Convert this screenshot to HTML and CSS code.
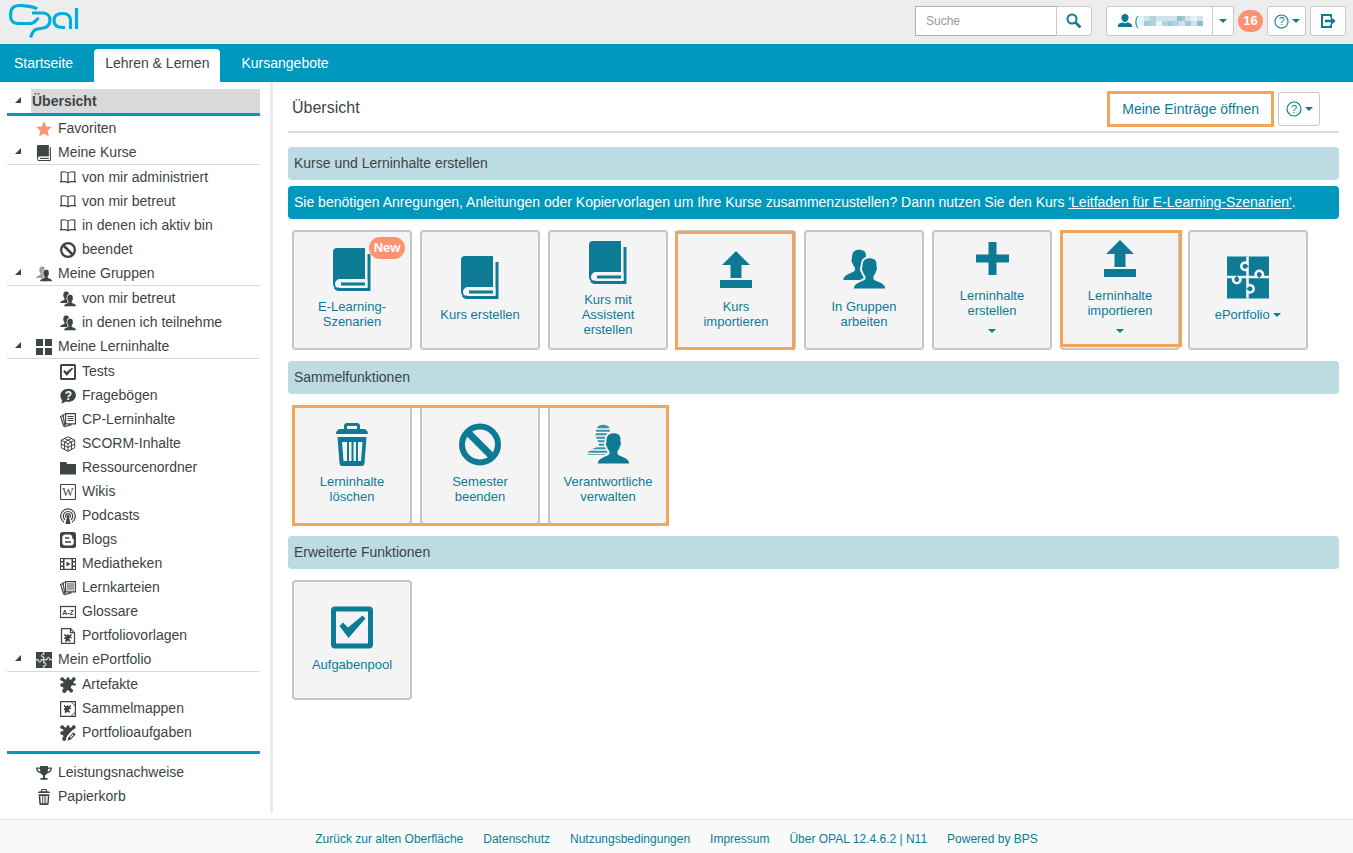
FILE: index.html
```html
<!DOCTYPE html>
<html lang="de">

<head>
    <meta charset="UTF-8">
    <meta name="viewport" content="width=device-width, initial-scale=1.0">
    <title>OPAL - Lehren &amp; Lernen</title>
    <link rel="stylesheet" href="styles.css">
</head>

<body>
    <!-- Icon sprite -->
    <svg class="sprite" aria-hidden="true">
        <symbol id="i-star" viewBox="0 0 16 16"><path d="M8 .3l2.200 5.200 5.600.5-4.200 3.700 1.300 5.700L8 12.400l-4.900 3 1.300-5.700L.2 6l5.600-.5z"/></symbol>
        <symbol id="i-book" viewBox="0 0 38 43"><path d="M4 0h28v31H7a5 5 0 0 0 0 10h-2a5 5 0 0 1-5-5V4a4 4 0 0 1 4-4z"/><path d="M34.500 6H37.500V43H5a5 5 0 0 1-4-3l6-1h27.500z"/><path class="cut" d="M32 31.500H7.500a3.500 3.500 0 0 0 0 8.500H34.500V31.500z"/><path d="M8 34.500h24v3H8z"/></symbol>
        <symbol id="i-open" viewBox="0 0 16 16"><path class="line" d="M8 3.200C6.500 1.700 3 1.700 1.200 2v9.800c2-.3 5.300-.3 6.800.9 1.500-1.200 4.800-1.200 6.800-.9V2C13 1.700 9.500 1.700 8 3.200zM8 3.200v9.500M0 11.800h1.200M14.800 11.800H16"/></symbol>
        <symbol id="i-ban" viewBox="0 0 42 42"><circle cx="21" cy="21" r="18" fill="none" stroke="currentColor" stroke-width="6"/><path d="M8.500 8.500l25 25" stroke="currentColor" stroke-width="7"/></symbol>
        <symbol id="i-person" viewBox="0 0 32 31" overflow="visible"><path d="M15.800.3c4.200 0 6.900 1.400 7.100 5l.1 4c.9.5.4 3.200-.6 4-.4 2-1.200 3.400-2.400 4.800v2.900c1.800 3 11.200 3 11.700 9.500H.3c.4-6.500 9.800-6.500 11.600-9.500v-2.900c-1.300-1.400-2.100-2.800-2.500-4.800-1-.8-1.300-3.500-.5-4 0-5.500 1.500-9 6.900-9z"/></symbol>
        <symbol id="i-group" viewBox="0 0 42 40"><use href="#i-person" width="32" height="31"/><g transform="translate(10.500 8.500)"><use href="#i-person" width="32" height="31" class="halo"/></g></symbol>
        <symbol id="i-group-light" viewBox="0 0 42 40"><use href="#i-person" width="32" height="31" opacity=".5"/><g transform="translate(10.500 8.500)"><use href="#i-person" width="32" height="31" class="halo"/></g></symbol>
        <symbol id="i-group-lines" viewBox="0 0 42 40"><use href="#i-person" width="32" height="31" opacity=".8"/><path class="cut-line" d="M0 4.500h32M0 8h32M0 11.500h32M0 15h32M0 18.500h32M0 22h32M0 25.500h32M0 29h32"/><g transform="translate(10.500 8.500)"><use href="#i-person" width="32" height="31" class="halo"/></g></symbol>
        <symbol id="i-grid" viewBox="0 0 16 16"><path d="M0 0h7v7H0zM9 0h7v7H9zM0 9h7v7H0zM9 9h7v7H9z"/></symbol>
        <symbol id="i-check" viewBox="0 0 42 42"><rect x="2.500" y="2.500" width="37" height="37" rx="1.500" fill="none" stroke="currentColor" stroke-width="5"/><path d="M8.500 19.500l3.500-3.500 5 5L31.500 9l3 3L17.500 31.500z"/></symbol>
        <symbol id="i-cards" viewBox="0 0 16 16"><path class="line" d="M5.600 1.600h9.800v10.200H5.600zM4.800 2.500L3 3l2 11.500 6.500-1.800M2.500 3.800L.6 4.500 3.800 14.500"/><path class="line" d="M7.500 4.500h6M7.500 6.500h6M7.500 8.500h6"/></symbol>
        <symbol id="i-flash" viewBox="0 0 16 16"><path class="line" d="M5.600 1.600h9.800v10.200H5.600zM4.800 2.500L3 3l2 11.500 6.500-1.800M2.500 3.800L.6 4.500 3.800 14.500"/><path d="M7 3h7v7.500H7z" opacity=".5"/></symbol>
        <symbol id="i-cube" viewBox="0 0 16 16"><path class="line thin" d="M8 .7l6.700 3.500v7.600L8 15.300l-6.700-3.500V4.200zM1.300 4.200L8 7.700l6.700-3.500M8 7.700v7.600M4.700 2.500l6.700 3.500v7.600M11.300 2.500L4.600 6v7.600M1.300 8L8 11.500 14.700 8"/></symbol>
        <symbol id="i-folder" viewBox="0 0 16 16"><path d="M0 2h6l1.500 2H16v10.500H0z"/></symbol>
        <symbol id="i-podcast" viewBox="0 0 16 16"><path class="line" d="M4 14.200a7.300 7.300 0 1 1 8 0M5 11.800a4.700 4.700 0 1 1 6 0M6.300 9.500a2.300 2.300 0 1 1 3.400 0"/><path d="M8 6.800a1.300 1.300 0 0 1 1 2l1.500 7.200h-5L7 8.800a1.300 1.300 0 0 1 1-2z"/></symbol>
        <symbol id="i-blog" viewBox="0 0 16 16"><rect width="16" height="16" rx="2.500"/><path class="cut" d="M5.500 2.500h3.800c1.800 0 3 1.200 3 3v.8c0 .6.400.7.900.8.500.1.600.5.600 1v2.200c0 2-1.300 3.300-3.200 3.300H5.500c-2 0-3.200-1.300-3.200-3.300V5.800c0-2 1.200-3.300 3.200-3.300z"/><path d="M5 5.200h4.300v1.600H5zM5 9.200h6v1.600H5z"/></symbol>
        <symbol id="i-film" viewBox="0 0 16 16"><path d="M0 2h4.500v12H0zM11.500 2H16v12h-4.500z"/><path class="line" d="M4 2.600h8M4 13.400h8"/><path d="M6.500 5.500v5l4-2.500z"/><path class="cut" d="M1 3h2v2H1zM1 6.500h2v3H1zM1 11h2v2H1zM13 3h2v2h-2zM13 6.500h2v3h-2zM13 11h2v2h-2z"/></symbol>
        <symbol id="i-piece" viewBox="0 0 16 16"><path d="M1.500.5c1-.8 2.500 0 2.500 1.300 1 .9 1.800.9 2.800 0C6.500.7 8-.3 9.200.7c.6.6.5 1.300.3 1.800 1 .4 1.800.1 2.500-.7C12 .5 13.800-.2 15 .8c1.300 1.200.5 3-1 3.200-.7 1-.7 1.700.2 2.500.8-.4 2 .2 1.800 1.500-.8 1.200-1.500.7-2.200.3-1.600-.6-3.300.7-3 2.200.2 1 1 1.300 1.700 2 1 .8.600 2.200-.5 2.900-1.300.6-2.500-.1-2.500-1.400-1-.9-2-.9-3 0-.2 1.500-1.500 2.300-2.800 1.800-1.500-.5-2-2-1-3.300.8-.8.800-1.600.2-2.500-1.700.2-2.900-.8-2.700-2.200.3-1.400 1.500-1.900 2.600-1.300.7-.9.700-1.800 0-2.500C1 4.200 0 3.300.2 2 .3 1.300.8.700 1.500.5z"/></symbol>
        <symbol id="i-template" viewBox="0 0 16 16"><path class="line" d="M1.500.7h9l4 4v10.600h-13zM10.500.7v4h4"/><use href="#i-piece" x="4" y="6" width="8" height="8"/></symbol>
        <symbol id="i-folio" viewBox="0 0 16 16"><path class="line" d="M.6.6h14.800v14.800H.6z"/><path class="line thin" d="M11 .6l4.400 4.400M11 15.400l4.400-4.400"/><use href="#i-piece" x="3.500" y="4" width="8" height="8"/></symbol>
        <symbol id="i-task" viewBox="0 0 16 16"><use href="#i-piece" width="16" height="16"/><path class="cut" d="M5.500 16l1.500-5L13 4.500 16 6v10z"/><path d="M7.500 15.500l.8-3L13.500 7.300l2.200 2.200-5.200 5.200z"/><path class="cut" d="M9.800 12.300l3-3 .8.800-3 3z"/></symbol>
        <symbol id="i-puzzle" viewBox="0 0 42 42"><path d="M0 0h42v42H0z"/><path d="M20.500 0v7a3.700 3.700 0 1 0 0 5.500v17a3.700 3.700 0 1 1 0 5.500V42M0 20.500h7a3.700 3.700 0 1 0 5.500 0h17a3.700 3.700 0 1 1 5.500 0H42" fill="none" stroke="var(--cut)" stroke-width="2.600"/></symbol>
        <symbol id="i-cup" viewBox="0 0 16 16"><path d="M4 1h8v1.500h4C16 6 14 8 11 8.500c-.7 1-1.300 1.500-2 1.800V13h2.500v1.800h-7V13H7v-2.700C6.300 10 5.700 9.500 5 8.500 2 8 0 6 0 2.500h4zM1.500 3.800c.3 1.500 1.300 2.600 2.800 3L4 3.800zM14.500 3.800H12l-.3 3c1.500-.4 2.500-1.500 2.800-3z" fill-rule="evenodd"/></symbol>
        <symbol id="i-trash" viewBox="0 0 32 43"><path d="M8 6V3a3 3 0 0 1 3-3h10a3 3 0 0 1 3 3v3h3c3 0 5 2 5 5H0c0-3 2-5 5-5zM11 6h10V3H11z" fill-rule="evenodd"/><path d="M1.500 14h29L28.500 40a3 3 0 0 1-3 3h-19a3 3 0 0 1-3-3zM6 19l1.500 19H11V19zM13 19v19h2.500V19zM17.500 19v19H20V19zM22 19v19h3L26.500 19z" fill-rule="evenodd"/></symbol>
        <symbol id="i-upload" viewBox="0 0 32 37"><path d="M16 0l14 14h-8.500v13h-11V14H2zM0 29h32v8H0z"/></symbol>
        <symbol id="i-plus" viewBox="0 0 33 33"><path d="M12.500 0h8v12.500H33v8H20.500V33h-8V20.500H0v-8h12.500z"/></symbol>
        <symbol id="i-search" viewBox="0 0 16 16"><circle cx="6" cy="6" r="4.500" fill="none" stroke="currentColor" stroke-width="2"/><path d="M9 9l5.500 5.500" stroke="currentColor" stroke-width="2.600"/></symbol>
        <symbol id="i-user" viewBox="0 0 16 14"><path d="M8 0c2.200 0 3.600 1.500 3.600 3.800C11.600 6 10 8.200 8 8.200S4.400 6 4.400 3.800C4.400 1.500 5.800 0 8 0zM1 13c-.5-2.500.8-3.500 4.300-4.700 1.500 1.200 3.900 1.200 5.400 0C14.200 9.500 15.500 10.500 15 13z"/></symbol>
        <symbol id="i-exit" viewBox="0 0 16 16"><path d="M11 4.500V2H2v12h9v-2.500" fill="none" stroke="currentColor" stroke-width="2"/><path d="M5 6.800h6V4l4.800 4-4.800 4V9.200H5z"/></symbol>
    </svg>

    <header class="topbar">
        <a class="logo" href="#" aria-label="Opal">
            <svg viewBox="0 0 72 36" width="72" height="36">
                <path d="M29 6C26 3.500 20 3.500 15 2.700 7 1.700 2.700 4 2.700 11v3c0 4 3 6.500 7.300 6.500h12C28 20.500 27 16 31 15.500M24 10h10c5 0 8 3 8 7 0 5-3 8-9 8.500-7 .500-8 2-10.500 9M62.500 26V17.500c0-4.500-3-7-8-7-5.500 0-8.500 2.500-8.500 7s3 7 8.500 7H57M68.500 5v21" fill="none" stroke="#00aede" stroke-width="3.200"/>
            </svg>
        </a>
        <form class="search">
            <input type="text" placeholder="Suche" aria-label="Suche">
            <button type="submit" class="btn" aria-label="Suchen"><svg width="16" height="16"><use href="#i-search"/></svg></button>
        </form>
        <div class="user">
            <button type="button" class="btn user-name" aria-label="Profil">
                <svg width="16" height="14"><use href="#i-user"/></svg>
                <span class="masked"><span>(</span>
                    <svg width="64" height="12" viewBox="0 0 64 12">
                        <path d="M0 1h64v10H0z" fill="#cfe4e9"/>
                        <path d="M0 1h5v10H0zM17 6h6v5h-6zM52 1h6v5h-6z" fill="#e6f3f5"/>
                        <path d="M5 6h6v5H5zM29 6h5v5h-5zM40 1h6v5h-6zM46 6h6v5h-6z" fill="#9fcbd7"/>
                        <path d="M11 1h6v10h-6zM23 6h6v5h-6zM34 6h6v5h-6z" fill="#b3d3dc"/>
                        <path d="M58 6h6v5h-6zM38 1h5v5h-5z" fill="#8cc0ce"/>
                    </svg>
                </span>
            </button>
            <button type="button" class="btn user-menu" aria-label="Profilmenü"><i class="caret"></i></button>
        </div>
        <span class="badge">16</span>
        <button type="button" class="btn help" aria-label="Hilfe">
            <svg width="15" height="15" viewBox="0 0 16 16"><circle class="line" cx="8" cy="8" r="7"/><text x="8" y="12" font-size="11" text-anchor="middle">?</text></svg><i class="caret"></i>
        </button>
        <button type="button" class="btn logout" aria-label="Abmelden"><svg width="16" height="16"><use href="#i-exit"/></svg></button>
    </header>

    <nav class="tabs">
        <a href="#">Startseite</a>
        <a href="#" class="active">Lehren &amp; Lernen</a>
        <a href="#">Kursangebote</a>
    </nav>

    <div class="page">
        <nav class="sidebar">
            <div class="row root">
                <button type="button" class="toggle" aria-label="Zuklappen"></button>
                <a href="#">Übersicht</a>
            </div>
            <ul class="tree">
                <li><a class="row" href="#"><svg class="icon favorite"><use href="#i-star"/></svg>Favoriten</a></li>
                <li>
                    <div class="row parent">
                        <button type="button" class="toggle" aria-label="Zuklappen"></button>
                        <a href="#"><svg class="icon"><use href="#i-book"/></svg>Meine Kurse</a>
                    </div>
                    <ul>
                        <li><a class="row" href="#"><svg class="icon"><use href="#i-open"/></svg>von mir administriert</a></li>
                        <li><a class="row" href="#"><svg class="icon"><use href="#i-open"/></svg>von mir betreut</a></li>
                        <li><a class="row" href="#"><svg class="icon"><use href="#i-open"/></svg>in denen ich aktiv bin</a></li>
                        <li><a class="row" href="#"><svg class="icon"><use href="#i-ban"/></svg>beendet</a></li>
                    </ul>
                </li>
                <li>
                    <div class="row parent">
                        <button type="button" class="toggle" aria-label="Zuklappen"></button>
                        <a href="#"><svg class="icon"><use href="#i-group-light"/></svg>Meine Gruppen</a>
                    </div>
                    <ul>
                        <li><a class="row" href="#"><svg class="icon"><use href="#i-group"/></svg>von mir betreut</a></li>
                        <li><a class="row" href="#"><svg class="icon"><use href="#i-group"/></svg>in denen ich teilnehme</a></li>
                    </ul>
                </li>
                <li>
                    <div class="row parent">
                        <button type="button" class="toggle" aria-label="Zuklappen"></button>
                        <a href="#"><svg class="icon"><use href="#i-grid"/></svg>Meine Lerninhalte</a>
                    </div>
                    <ul>
                        <li><a class="row" href="#"><svg class="icon"><use href="#i-check"/></svg>Tests</a></li>
                        <li>
                            <a class="row" href="#"><svg class="icon" viewBox="0 0 16 16"><path d="M8.500.8c4.300 0 7.400 2.800 7.400 6.500s-3.200 6.600-7.400 6.600c-1 0-2-.1-2.800-.4C4.500 14.600 3 15.300.8 15.200c1-.8 1.500-1.800 1.400-3C.9 11 .4 9.300.4 7.500.4 3.700 4 .8 8.500.8z"/><text class="cut" x="8.500" y="11.800" font-size="12" font-weight="bold" text-anchor="middle">?</text></svg>Fragebögen</a>
                        </li>
                        <li><a class="row" href="#"><svg class="icon"><use href="#i-cards"/></svg>CP-Lerninhalte</a></li>
                        <li><a class="row" href="#"><svg class="icon"><use href="#i-cube"/></svg>SCORM-Inhalte</a></li>
                        <li><a class="row" href="#"><svg class="icon"><use href="#i-folder"/></svg>Ressourcenordner</a></li>
                        <li>
                            <a class="row" href="#"><svg class="icon" viewBox="0 0 16 16"><rect class="line" x=".5" y=".5" width="15" height="15" rx="1"/><text class="serif" x="8" y="12" font-size="12" text-anchor="middle">W</text></svg>Wikis</a>
                        </li>
                        <li><a class="row" href="#"><svg class="icon"><use href="#i-podcast"/></svg>Podcasts</a></li>
                        <li><a class="row" href="#"><svg class="icon"><use href="#i-blog"/></svg>Blogs</a></li>
                        <li><a class="row" href="#"><svg class="icon"><use href="#i-film"/></svg>Mediatheken</a></li>
                        <li><a class="row" href="#"><svg class="icon"><use href="#i-flash"/></svg>Lernkarteien</a></li>
                        <li>
                            <a class="row" href="#"><svg class="icon" viewBox="0 0 16 16"><rect class="line" x=".5" y="2.500" width="15" height="11"/><text x="8" y="10.500" font-size="7" font-weight="bold" text-anchor="middle">A-Z</text></svg>Glossare</a>
                        </li>
                        <li><a class="row" href="#"><svg class="icon"><use href="#i-template"/></svg>Portfoliovorlagen</a></li>
                    </ul>
                </li>
                <li>
                    <div class="row parent">
                        <button type="button" class="toggle" aria-label="Zuklappen"></button>
                        <a href="#"><svg class="icon"><use href="#i-puzzle"/></svg>Mein ePortfolio</a>
                    </div>
                    <ul>
                        <li><a class="row" href="#"><svg class="icon"><use href="#i-piece"/></svg>Artefakte</a></li>
                        <li><a class="row" href="#"><svg class="icon"><use href="#i-folio"/></svg>Sammelmappen</a></li>
                        <li><a class="row" href="#"><svg class="icon"><use href="#i-task"/></svg>Portfolioaufgaben</a></li>
                    </ul>
                </li>
            </ul>
            <ul class="tree extra">
                <li><a class="row" href="#"><svg class="icon"><use href="#i-cup"/></svg>Leistungsnachweise</a></li>
                <li><a class="row" href="#"><svg class="icon"><use href="#i-trash"/></svg>Papierkorb</a></li>
            </ul>
        </nav>

        <main class="content">
            <div class="title">
                <h1>Übersicht</h1>
                <button type="button" class="btn entries">Meine Einträge öffnen</button>
                <button type="button" class="btn help" aria-label="Hilfe">
                    <svg width="16" height="16" viewBox="0 0 16 16"><circle class="line" cx="8" cy="8" r="7"/><text x="8" y="12" font-size="11" text-anchor="middle">?</text></svg><i class="caret"></i>
                </button>
            </div>

            <h2>Kurse und Lerninhalte erstellen</h2>
            <p class="info">Sie benötigen Anregungen, Anleitungen oder Kopiervorlagen um Ihre Kurse zusammenzustellen? Dann nutzen Sie den Kurs <a href="#">'Leitfaden für E-Learning-Szenarien'</a>.</p>
            <div class="tiles">
                <button type="button" class="tile"><svg width="38" height="43"><use href="#i-book"/></svg>E-Learning-<br>Szenarien<span class="badge new">New</span></button>
                <button type="button" class="tile"><svg width="38" height="43"><use href="#i-book"/></svg>Kurs erstellen</button>
                <button type="button" class="tile"><svg width="38" height="43"><use href="#i-book"/></svg>Kurs mit<br>Assistent<br>erstellen</button>
                <button type="button" class="tile"><svg width="32" height="43"><use href="#i-upload"/></svg>Kurs<br>importieren<span class="frame"></span></button>
                <button type="button" class="tile"><svg width="42" height="43"><use href="#i-group"/></svg>In Gruppen<br>arbeiten</button>
                <button type="button" class="tile"><svg width="33" height="43"><use href="#i-plus"/></svg>Lerninhalte<br>erstellen<span class="drop"><i class="caret"></i></span></button>
                <button type="button" class="tile"><svg width="32" height="43"><use href="#i-upload"/></svg>Lerninhalte<br>importieren<span class="drop"><i class="caret"></i></span><span class="frame wide"></span></button>
                <button type="button" class="tile"><svg width="42" height="43"><use href="#i-puzzle"/></svg><span>ePortfolio <i class="caret"></i></span></button>
            </div>

            <h2>Sammelfunktionen</h2>
            <div class="tiles">
                <div class="group">
                    <button type="button" class="tile"><svg width="32" height="43"><use href="#i-trash"/></svg>Lerninhalte<br>löschen</button>
                    <button type="button" class="tile"><svg width="42" height="43"><use href="#i-ban"/></svg>Semester<br>beenden</button>
                    <button type="button" class="tile"><svg width="42" height="43"><use href="#i-group-lines"/></svg>Verantwortliche<br>verwalten</button>
                    <span class="frame"></span>
                </div>
            </div>

            <h2>Erweiterte Funktionen</h2>
            <div class="tiles">
                <button type="button" class="tile"><svg width="42" height="43"><use href="#i-check"/></svg>Aufgabenpool</button>
            </div>
        </main>
    </div>

    <footer class="footer">
        <a href="#">Zurück zur alten Oberfläche</a>
        <a href="#">Datenschutz</a>
        <a href="#">Nutzungsbedingungen</a>
        <a href="#">Impressum</a>
        <a href="#">Über OPAL 12.4.6.2 | N11</a>
        <a href="#">Powered by BPS</a>
    </footer>
</body>

</html>
```

FILE: styles.css
```css
* {
    box-sizing: border-box;
}

body {
    --cut: #fff;
    display: flex;
    flex-direction: column;
    min-height: 100vh;
    margin: 0;
    font-family: "Liberation Sans", Arial, sans-serif;
    font-size: 14px;
    color: #3d4445;
    background-color: #fff;
}

a {
    color: inherit;
    text-decoration: none;
}

button,
input {
    font-family: inherit;
    font-size: inherit;
}

button {
    cursor: pointer;
}

ul {
    list-style: none;
    margin: 0;
    padding: 0;
}

svg {
    fill: currentColor;
    flex: none;
}

.sprite {
    position: absolute;
    width: 0;
    height: 0;
}

.cut {
    fill: var(--cut);
}

.line {
    fill: none;
    stroke: currentColor;
    stroke-width: 1.2;
}

.thin {
    stroke-width: 1;
}

.serif {
    font-family: "Liberation Serif", serif;
}

.cut-line {
    stroke: var(--cut);
    stroke-width: 1.4;
}

.halo {
    stroke: var(--cut);
    stroke-width: 4;
    paint-order: stroke;
}

/* Top bar */
.topbar {
    display: flex;
    align-items: flex-start;
    height: 44px;
    padding: 6px 7px 0 8px;
    background-color: #ededed;
}

.logo {
    margin-top: -3px;
    margin-right: auto;
}

.logo svg {
    display: block;
}

.btn {
    display: flex;
    align-items: center;
    justify-content: center;
    height: 30px;
    padding: 0;
    border: 1px solid #c8c8c8;
    border-radius: 3px;
    background-color: #fff;
    color: #0d7b96;
}

.search {
    display: flex;
    margin-right: 14px;
}

.search input {
    width: 142px;
    height: 30px;
    padding: 0 10px;
    border: 1px solid #b0b0b0;
    border-radius: 0;
    font-size: 12px;
}

.search input::placeholder {
    color: #999;
}

.search .btn {
    width: 36px;
    margin-left: -1px;
    border-radius: 0 3px 3px 0;
}

.user {
    display: flex;
    margin-right: 4px;
}

.user-name {
    width: 107px;
    gap: 2px;
    border-radius: 3px 0 0 3px;
}

.masked {
    display: flex;
    align-items: center;
    font-size: 12px;
}

.user-menu {
    width: 22px;
    margin-left: -1px;
    border-radius: 0 3px 3px 0;
}

.caret {
    display: inline-block;
    border: 4px solid transparent;
    border-top-color: currentColor;
    border-bottom: 0;
    vertical-align: middle;
}

.badge {
    width: 25px;
    margin-top: 4px;
    margin-right: 4px;
    border-radius: 11px;
    background-color: #fb9270;
    color: #fff;
    font-size: 13px;
    font-weight: bold;
    line-height: 22px;
    text-align: center;
}

.help {
    gap: 3px;
    width: 39px;
}

.logout {
    width: 36px;
    margin-left: 4px;
}

/* Main tabs */
.tabs {
    display: flex;
    align-items: flex-end;
    gap: 10px;
    height: 38px;
    padding-left: 3px;
    background-color: #0099bd;
}

.tabs a {
    height: 33px;
    padding: 0 11px;
    border-radius: 4px 4px 0 0;
    color: #fff;
    line-height: 28px;
}

.tabs .active {
    background-color: #fff;
    color: #3d4445;
}

.page {
    display: flex;
    flex: 1;
}

/* Sidebar tree */
.sidebar {
    flex: none;
    width: 270px;
    padding: 7px 10px 5px 7px;
}

.row {
    display: flex;
    align-items: center;
    height: 24px;
    padding-left: 29px;
}

.root {
    height: 27px;
    padding-left: 0;
    border-bottom: 3px solid #0099bd;
    font-weight: bold;
}

.root a {
    flex: 1;
    padding-left: 1px;
    background-color: #d9d9d9;
    line-height: 24px;
}

.parent {
    height: 25px;
    padding-left: 0;
    border-bottom: 1px solid #d9d9d9;
}

.parent a {
    display: flex;
    align-items: center;
    padding-left: 5px;
}

.toggle {
    flex: none;
    width: 24px;
    height: 24px;
    padding: 0 10px 2px 8px;
    border: 0;
    background: none;
}

.toggle::before {
    content: "";
    display: block;
    width: 6px;
    height: 6px;
    background-color: #3d4445;
    clip-path: polygon(100% 0, 100% 100%, 0 100%);
}

.tree ul .row {
    padding-left: 53px;
}

.icon {
    width: 16px;
    height: 16px;
    margin-top: 2px;
    margin-right: 6px;
}

.favorite {
    color: #fb9270;
}

.extra {
    margin-top: 7px;
    padding-top: 6px;
    border-top: 3px solid #0099bd;
}

/* Content */
.content {
    flex: 1;
    padding: 0 14px 0 15px;
    border-left: 3px solid #ebebeb;
}

.title {
    display: flex;
    align-items: center;
    gap: 4px;
    height: 51px;
    margin-bottom: 14px;
    padding: 5px 19px 0 4px;
    border-bottom: 2px solid #dedede;
}

.title .btn {
    height: 34px;
}

h1 {
    margin: 0 auto 2px 0;
    font-size: 16px;
    font-weight: normal;
}

.title .entries {
    height: 36px;
    padding: 0 12px;
    border: 3px solid #f3a55b;
    border-radius: 0;
}

.title .help {
    width: 42px;
}

h2,
.info {
    margin: 0;
    padding: 0 6px;
    border-radius: 4px;
    background-color: #bcdbe2;
    font-size: 14px;
    font-weight: normal;
    line-height: 33px;
}

.info {
    margin-top: 6px;
    background-color: #0099bd;
    color: #fff;
}

.info a {
    text-decoration: underline;
}

.tiles {
    display: flex;
    flex-wrap: wrap;
    gap: 8px;
    padding: 11px 4px;
}

.group {
    position: relative;
    display: flex;
    gap: 8px;
}

.tile {
    --cut: #f4f4f4;
    position: relative;
    display: flex;
    flex-direction: column;
    align-items: center;
    justify-content: center;
    width: 120px;
    height: 120px;
    padding: 0 0 3px;
    border: 2px solid #c6c6c6;
    border-radius: 4px;
    background-color: #f4f4f4;
    color: #0d7b96;
    font-size: 13px;
    line-height: 15px;
}

.tile svg {
    margin-bottom: 8px;
}

.drop {
    height: 22px;
    line-height: 24px;
}

.new {
    position: absolute;
    top: 5px;
    right: 5px;
    width: 36px;
    margin: 0;
}

/* Orange marker around tiles */
.frame {
    position: absolute;
    inset: -1px -1px -2px -3px;
    border: 3px solid #f3a55b;
}

.frame.wide {
    inset: -2px -4px 1px -2px;
}

.group .frame {
    inset: 0 -1px -1px 0;
}

.footer {
    display: flex;
    justify-content: center;
    gap: 20px;
    height: 34px;
    margin-top: 6px;
    border-top: 1px solid #e8e8e8;
    background-color: #f8faf9;
    color: #0d7b96;
    font-size: 12px;
    line-height: 38px;
}
```
